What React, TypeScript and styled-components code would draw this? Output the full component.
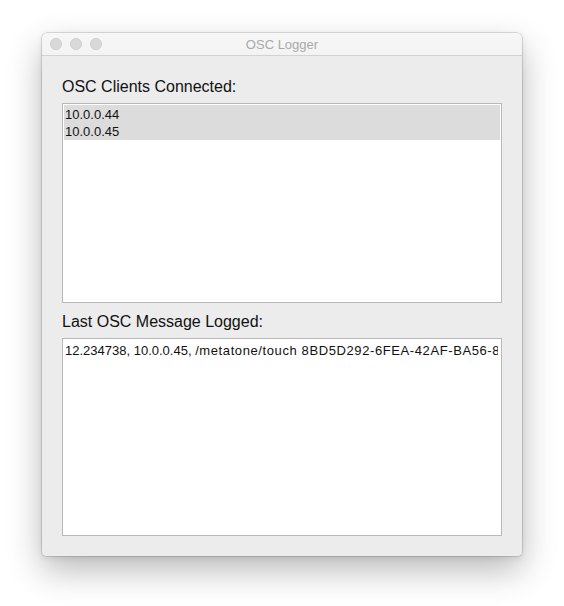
import React from "react";
import styled, { createGlobalStyle } from "styled-components";

const GlobalStyle = createGlobalStyle`
  html, body {
    margin: 0;
    padding: 0;
    background: #ffffff;
  }
  body {
    font-family: "Liberation Sans", Arial, sans-serif;
    -webkit-font-smoothing: antialiased;
  }
`;

const Page = styled.div`
  width: 564px;
  height: 606px;
  padding: 33px 0 0 42px;
  box-sizing: border-box;
`;

const Window = styled.div`
  width: 480px;
  height: 523px;
  display: flex;
  flex-direction: column;
  background: #ececec;
  border-radius: 5px 5px 4px 4px;
  box-shadow: 0 0 0 0.5px rgba(0, 0, 0, 0.24), 0 14px 34px rgba(0, 0, 0, 0.28),
    0 2px 6px rgba(0, 0, 0, 0.08);
  overflow: hidden;
`;

const TitleBar = styled.div`
  position: relative;
  height: 22px;
  flex: 0 0 22px;
  display: flex;
  align-items: center;
  justify-content: center;
  background: linear-gradient(#f7f7f7, #f3f3f3);
  border-bottom: 1px solid #d2d2d2;
`;

const Lights = styled.div`
  position: absolute;
  left: 8px;
  top: 5px;
  display: flex;
  gap: 8px;
`;

const Light = styled.span`
  width: 12px;
  height: 12px;
  border-radius: 50%;
  box-sizing: border-box;
  background: #d9d9d9;
  border: 0.5px solid #cdcdcd;
`;

const Title = styled.div`
  font-size: 13px;
  color: #a9a9a9;
  line-height: 16px;
  margin-top: 1px;
`;

const Body = styled.div`
  flex: 1;
  display: flex;
  flex-direction: column;
  padding: 21px 20px 20px;
  min-height: 0;
`;

const Label = styled.div<{ $top?: number }>`
  font-size: 16px;
  line-height: 19px;
  color: #111;
  margin-top: ${(p) => p.$top ?? 0}px;
  margin-bottom: 7px;
`;

const ListBox = styled.div`
  height: 200px;
  flex: 0 0 200px;
  box-sizing: border-box;
  background: #fff;
  border: 1px solid #b9b9b9;
  padding: 1px;
`;

const Row = styled.div<{ $selected?: boolean }>`
  font-size: 13px;
  line-height: 17px;
  height: 17px;
  padding-left: 1px;
  color: #111;
  background: ${(p) => (p.$selected ? "#dcdcdc" : "transparent")};
  &:first-child {
    padding-top: 1px;
  }
`;

const MessageBox = styled.div`
  flex: 1;
  box-sizing: border-box;
  background: #fff;
  border: 1px solid #b9b9b9;
  padding: 3px 3px 3px 2px;
  min-height: 0;
`;

const MessageLine = styled.div`
  font-size: 13px;
  line-height: 17px;
  color: #111;
  white-space: nowrap;
  overflow: hidden;
`;

const Segment = styled.span<{ $spacing?: number }>`
  letter-spacing: ${(p) => p.$spacing ?? 0}px;
`;

const clients = ["10.0.0.44", "10.0.0.45"];

export default function App() {
  return (
    <>
      <GlobalStyle />
      <Page>
        <Window>
          <TitleBar>
            <Lights>
              <Light />
              <Light />
              <Light />
            </Lights>
            <Title>OSC Logger</Title>
          </TitleBar>
          <Body>
            <Label>OSC Clients Connected:</Label>
            <ListBox>
              {clients.map((c) => (
                <Row key={c} $selected>
                  {c}
                </Row>
              ))}
            </ListBox>
            <Label $top={9}>Last OSC Message Logged:</Label>
            <MessageBox>
              <MessageLine>
                <Segment>12.234738, 10.0.0.45, </Segment>
                <Segment $spacing={0.6}>
                  /metatone/touch 8BD5D292-6FEA-42AF-BA56-8E1C4D7A2B30 0.512 0.384
                </Segment>
              </MessageLine>
            </MessageBox>
          </Body>
        </Window>
      </Page>
    </>
  );
}
